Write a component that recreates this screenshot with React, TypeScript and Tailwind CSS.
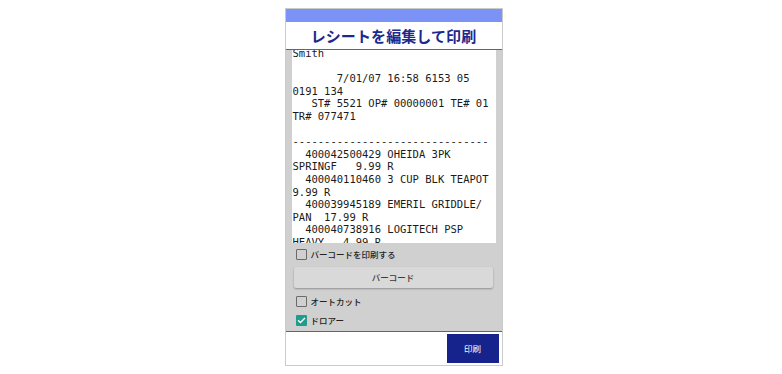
import React from 'react';

const receiptLines = [
  'Smith',
  '',
  '       7/01/07 16:58 6153 05',
  '0191 134',
  '   ST# 5521 OP# 00000001 TE# 01',
  'TR# 077471',
  '',
  '-------------------------------',
  '  400042500429 OHEIDA 3PK',
  'SPRINGF   9.99 R',
  '  400040110460 3 CUP BLK TEAPOT',
  '9.99 R',
  '  400039945189 EMERIL GRIDDLE/',
  'PAN  17.99 R',
  '  400040738916 LOGITECH PSP',
  'HEAVY   4.99 R',
];

const jp = { fontFamily: '"Noto Sans CJK JP", "Noto Sans", sans-serif' };

const CheckRow: React.FC<{ label: string; checked?: boolean; className?: string }> = ({
  label,
  checked,
  className,
}) => (
  <div className={`flex items-center gap-[4px] pl-[4px] ${className ?? ''}`}>
    {checked ? (
      <span className="w-[11px] h-[11px] rounded-[1px] bg-[#1f9c8c] flex items-center justify-center">
        <svg viewBox="0 0 12 12" className="w-[9px] h-[9px]" fill="none" stroke="white" strokeWidth={1.8}>
          <path d="M2 6.2l2.6 2.6L10 3.4" strokeLinecap="square" />
        </svg>
      </span>
    ) : (
      <span className="w-[11px] h-[11px] rounded-[1px] border-[1.5px] border-[#6a6a6a]" />
    )}
    <span className="text-[8.5px] font-medium text-[#222] leading-none" style={jp}>
      {label}
    </span>
  </div>
);

export default function App() {
  return (
    <div className="w-[782px] h-[374px] bg-white flex justify-center pt-[8px]">
      <div className="ml-[5px] w-[218px] h-[358px] border border-[#cbcbcb] flex flex-col bg-white">
        {/* top bar */}
        <div className="h-[13px] bg-[#7b93f6]" />
        {/* title */}
        <div className="h-[28px] border-b border-[#4f5fc0] flex items-center justify-center">
          <h1 className="text-[15px] font-bold text-[#1b2a8e] leading-none tracking-[0.1px]" style={jp}>
            レシートを編集して印刷
          </h1>
        </div>

        {/* body */}
        <div className="h-[281px] bg-[#d0d0d0] px-[6px] flex flex-col">
          <div className="h-[193px] bg-white overflow-hidden">
            <pre
              className="-mt-[3px] pl-[1px] text-[10.5px] leading-[12.6px] text-[#1a1a1a] whitespace-pre"
              style={{ fontFamily: '"DejaVu Sans Mono", monospace' }}
            >
              {receiptLines.join('\n')}
            </pre>
          </div>
          <CheckRow label="バーコードを印刷する" className="h-[22px]" />
          <button
            className="mt-[2px] h-[21px] w-[199px] ml-[2px] bg-[#d9d9d9] rounded-[2px] shadow-[0_1px_2px_rgba(0,0,0,0.3)] text-[8.5px] font-medium text-[#3a3a3a] leading-none"
            style={jp}
          >
            バーコード
          </button>
          <CheckRow label="オートカット" className="mt-[3px] h-[20px]" />
          <CheckRow label="ドロアー" checked className="h-[18px]" />
        </div>

        {/* footer */}
        <div className="border-t border-[#4f5fc0] flex-1 flex justify-end items-start pt-[2px] pr-[3px]">
          <button
            className="w-[52px] h-[29px] bg-[#16238c] text-white text-[8.5px] leading-none"
            style={jp}
          >
            印刷
          </button>
        </div>
      </div>
    </div>
  );
}
